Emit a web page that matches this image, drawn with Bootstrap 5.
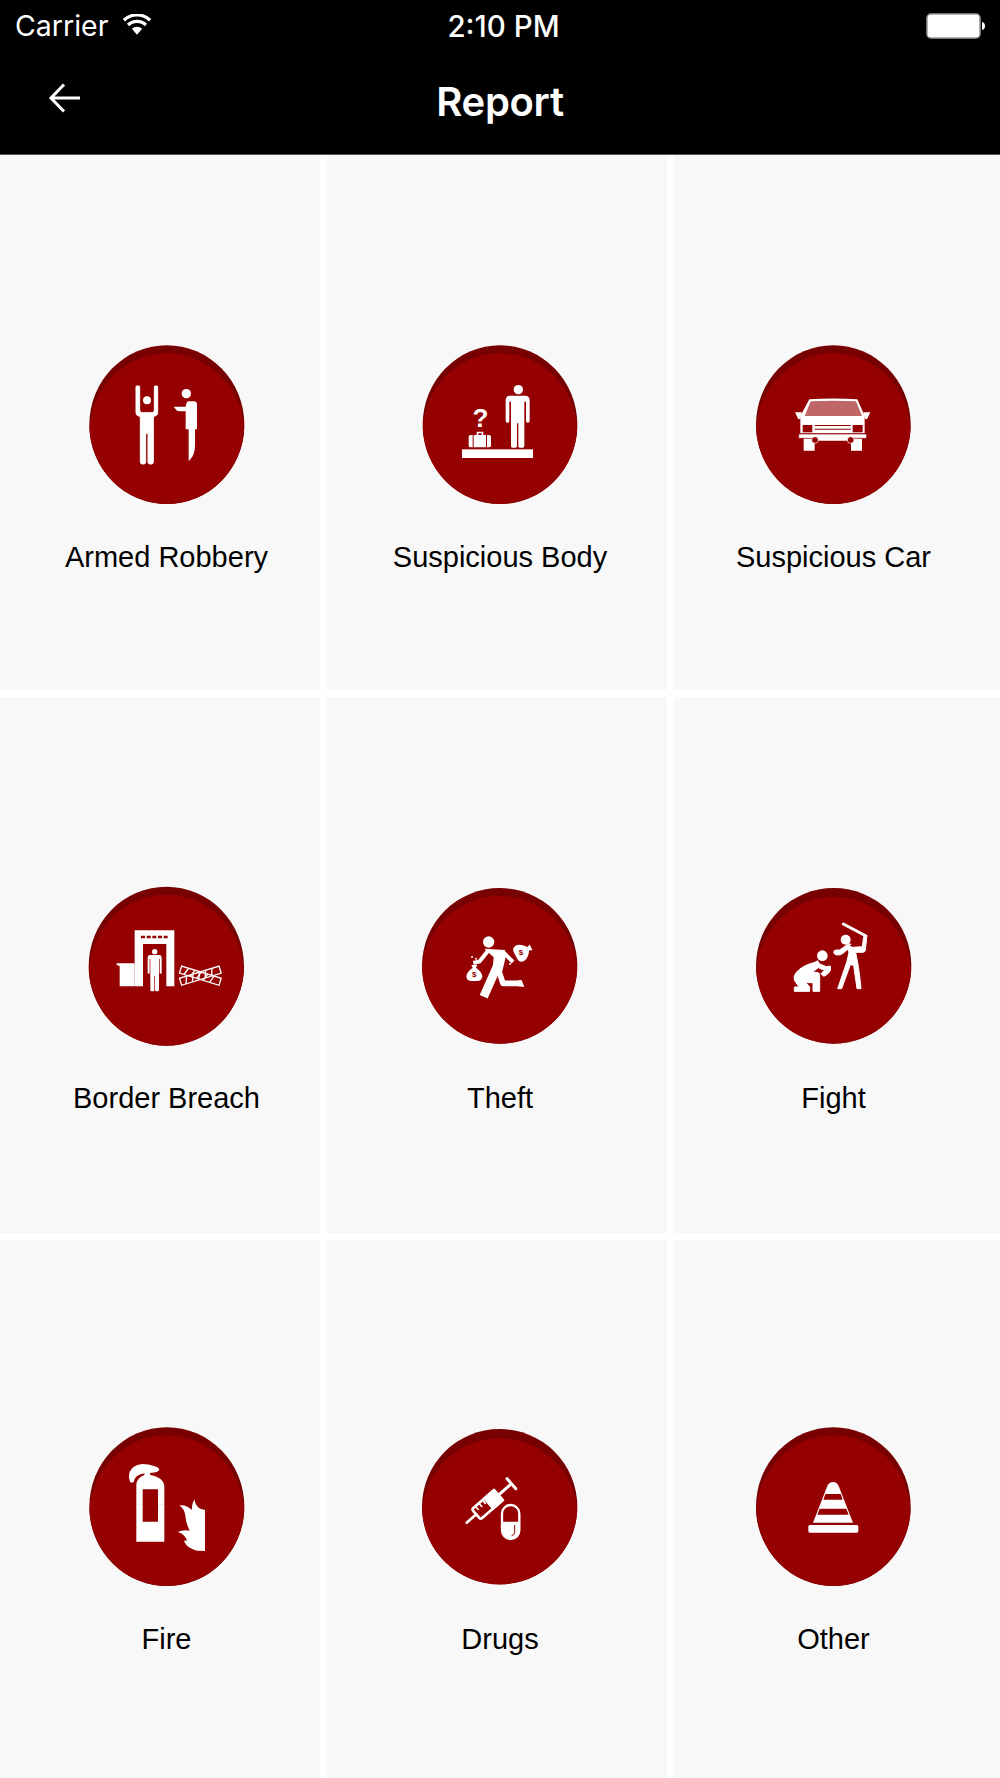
<!DOCTYPE html>
<html lang="en">
<head>
    <meta charset="UTF-8">
    <meta name="viewport" content="width=device-width, initial-scale=1.0">
    <title>Report</title>
    <link href="https://cdn.jsdelivr.net/npm/bootstrap@5.3.0/dist/css/bootstrap.min.css" rel="stylesheet">
    <style>
        body {
            background-color: #fff;
            font-family: "Liberation Sans", Arial, sans-serif;
        }

        .app-header {
            height: 155px;
            background-color: #000;
            border-bottom: 1px solid #555;
            font-family: Inter, "Liberation Sans", sans-serif;
        }

        .status-bar {
            height: 50px;
            padding: 2px 14px 0 15px;
            font-size: 28.5px;
        }

        .status-side {
            width: 300px;
            gap: 14px;
        }

        .status-time {
            font-size: 29.5px;
            font-weight: 500;
            margin-left: 6px;
        }

        .wifi-icon {
            margin-bottom: 4px;
        }

        .title-bar {
            height: 104px;
        }

        .title-side {
            width: 200px;
            padding-left: 48px;
            padding-bottom: 8px;
        }

        .page-title {
            font-size: 40px;
            font-weight: 600;
            letter-spacing: -0.3px;
        }

        .report-grid {
            display: grid;
            grid-template-columns: 320px 340px 326px;
            grid-template-rows: 535px 536px 538px;
            gap: 7px;
        }

        .report-cell {
            background-color: #f8f8f8;
            color: #000;
            text-align: center;
        }

        .report-cell svg {
            display: block;
            margin: 0 auto;
        }

        .col-one { padding-left: 13px; }
        .col-two { padding-left: 6px; }
        .col-three { padding-right: 7px; }

        .row-one { padding-top: 175px; }
        .row-two { padding-top: 173px; }
        .row-three { padding-top: 170px; }

        .report-label {
            margin-top: 20px;
            font-size: 29px;
            line-height: 35px;
        }

        .row-two .report-label { margin-top: 21px; }
        .row-three .report-label { margin-top: 22px; }

        .disc-dark { fill: #770000; }
        .disc-main { fill: #950000; }
        .ink { fill: #fff; }
        .ink-bold { fill: #fff; stroke: #fff; stroke-width: 3; stroke-linejoin: round; }
        .cut { fill: #950000; }
        .svg-note {
            font-family: "Liberation Sans", Arial, sans-serif;
            font-weight: 700;
        }
    </style>
</head>
<body>
    <!-- Status bar and title -->
    <header class="app-header text-white">
        <div class="status-bar d-flex align-items-center justify-content-between">
            <div class="status-side d-flex align-items-center">
                <span>Carrier</span>
                <svg class="wifi-icon" width="30" height="21" viewBox="0 0 32 22">
                    <path class="ink" d="M16 22 10.500 15.500A8 8 0 0 1 21.500 15.500Z"/>
                    <path d="M6.500 11.500A13.500 13.500 0 0 1 25.500 11.500M2 6.500A20 20 0 0 1 30 6.500" fill="none" stroke="#fff" stroke-width="3.500"/>
                </svg>
            </div>
            <span class="status-time">2:10 PM</span>
            <div class="status-side d-flex justify-content-end">
                <svg width="60" height="26" viewBox="0 0 60 26">
                    <rect x="1" y="1" width="53" height="24" rx="4" fill="#fff" stroke="#999" stroke-width="1.500"/>
                    <path d="M56 9q3 .5 3 4t-3 4z" fill="#fff"/>
                </svg>
            </div>
        </div>
        <div class="title-bar d-flex align-items-center justify-content-between">
            <div class="title-side">
                <svg class="d-block" width="34" height="30" viewBox="0 0 34 30">
                    <path d="M32 15H3M16 1.500 3 15 16 28.500" fill="none" stroke="#fff" stroke-width="3"/>
                </svg>
            </div>
            <div class="page-title">Report</div>
            <div class="title-side"></div>
        </div>
    </header>

    <!-- Report categories -->
    <main class="report-grid">
        <div class="report-cell col-one row-one">
            <svg width="190" height="190" viewBox="5 0 570 570">
                <ellipse class="disc-dark" cx="289.500" cy="284" rx="232.500" ry="238"/>
                <path class="disc-main" d="M57.300 296A232.500 238 0 0 0 521.700 296A232.500 238 0 0 0 57.300 296Z"/>
                <path class="ink-bold" d="M200 168h6a2 2 0 0 1 2 2V240q0 6 6 8h32q6-2 6-8V170a2 2 0 0 1 2-2h6a2 2 0 0 1 2 2V248q0 8-8 10l-5 2V396q0 6-6 6h-4q-6 0-6-6V310h-7V396q0 6-6 6h-4q-6 0-6-6V260l-5-2q-8-2-8-10V170a2 2 0 0 1 2-2z"/>
                <circle class="cut" cx="230" cy="211" r="16"/>
                <circle class="ink" cx="230" cy="211" r="12"/>
                <circle class="ink" cx="348" cy="191" r="14"/>
                <path class="ink" d="M356 214h14q10 0 10 10V298h-6V345q0 30-16 46l-3 2V298h-9V244q-20 0-26-2L310 230h36q2-16 10-16z"/>
            </svg>
            <div class="report-label">Armed Robbery</div>
        </div>
        <div class="report-cell col-two row-one">
            <svg width="190" height="190" viewBox="0 0 570 570">
                <ellipse class="disc-dark" cx="285" cy="284" rx="232" ry="238"/>
                <path class="disc-main" d="M53.300 296A232 238 0 0 0 516.700 296A232 238 0 0 0 53.300 296Z"/>
                <circle class="ink" cx="340" cy="179" r="14"/>
                <path class="ink" d="M318 197h42q14 0 14 14V272q0 6-5 6h-2q-4 0-4-6V215h-5V348q0 5-5 5h-9q-4 0-4-5V280h-4V348q0 5-5 5h-9q-4 0-4-5V215h-5V272q0 6-4 6h-2q-5 0-5-6V211q0-14 14-14z"/>
                <rect class="ink" x="171" y="358" width="213" height="26"/>
                <path class="ink" fill-rule="evenodd" d="M215 315v-10h20v10h17q6 0 6 6v26q0 5-6 5h-55q-6 0-6-5v-26q0-6 6-6zM220 315h10v-5h-10z"/>
                <path class="cut" d="M203 315h3v37h-3zM243 315h3v37h-3z"/>
                <text class="ink svg-note" x="226" y="292" font-size="78" text-anchor="middle">?</text>
            </svg>
            <div class="report-label">Suspicious Body</div>
        </div>
        <div class="report-cell col-three row-one">
            <svg width="190" height="190" viewBox="3 0 570 570">
                <ellipse class="disc-dark" cx="286" cy="284" rx="232" ry="238"/>
                <path class="disc-main" d="M54.300 296A232 238 0 0 0 517.700 296A232 238 0 0 0 54.300 296Z"/>
                <path class="ink" d="M214 208q72-5 144 0l22 50 v52H187v-52z"/>
                <path d="M218 214q68-4 136 0l18 44H200z" fill="#bf6666"/>
                <path class="ink" d="M171 247h21l-5 19-6 2zM397 247h-21l5 19 6 2z"/>
                <rect class="cut" x="194" y="285" width="29" height="22"/>
                <rect class="cut" x="344" y="285" width="30" height="22"/>
                <path class="cut" d="M230 285h108v3H230zM230 296h108v3H230z"/>
                <rect class="ink" x="182" y="312" width="204" height="13" rx="2" stroke="#950000" stroke-width="2"/>
                <path class="ink" d="M197 326h33v36H197zM339 326h33v36H339zM230 322h108v10H230z"/>
                <circle class="cut" cx="231" cy="330" r="10" stroke="#fff" stroke-width="2"/>
                <circle class="cut" cx="338" cy="330" r="10" stroke="#fff" stroke-width="2"/>
            </svg>
            <div class="report-label">Suspicious Car</div>
        </div>

        <div class="report-cell col-one row-two">
            <svg width="190" height="190" viewBox="5 0 570 570">
                <ellipse class="disc-dark" cx="288" cy="288.500" rx="233" ry="238.500"/>
                <path class="disc-main" d="M55.300 300.500A233 238.500 0 0 0 520.700 300.500A233 238.500 0 0 0 55.300 300.500Z"/>
                <path class="ink" d="M193 181H312V349H288V222H218V349H193z"/>
                <path class="ink" d="M139 280H193V349H148V288L139 285z"/>
                <path class="cut" d="M212 197h12v8h-12zM229 197h12v8h-12zM246 197h12v8h-12zM263 197h12v8h-12zM280 197h12v8h-12z"/>
                <circle class="ink" cx="253" cy="245" r="8"/>
                <path class="ink" d="M240 255h26q8 0 8 8V308q0 3-3 3t-3-3V266h-2V360q0 4-4 4h-5q-3 0-3-4V318h-2V360q0 4-3 4h-5q-4 0-4-4V266h-2V308q0 3-3 3t-3-3V263q0-8 8-8z"/>
                <g fill="none" stroke="#fff" stroke-width="4">
                    <g transform="rotate(17 390 317)">
                        <rect x="328" y="306" width="124" height="22"/>
                        <path d="M350 306l-8 22M370 306l-8 22M390 306l-8 22M410 306l-8 22M430 306l-8 22"/>
                    </g>
                    <g transform="rotate(-17 390 317)">
                        <rect x="328" y="306" width="124" height="22"/>
                        <path d="M350 306l-8 22M370 306l-8 22M390 306l-8 22M410 306l-8 22M430 306l-8 22"/>
                    </g>
                </g>
            </svg>
            <div class="report-label">Border Breach</div>
        </div>
        <div class="report-cell col-two row-two">
            <svg width="190" height="190" viewBox="0 0 570 570">
                <ellipse class="disc-dark" cx="284" cy="287.500" rx="233" ry="233.500"/>
                <path class="disc-main" d="M51.300 299.500A233 233.500 0 0 0 516.700 299.500A233 233.500 0 0 0 51.300 299.500Z"/>
                <circle class="ink" cx="251" cy="216" r="17"/>
                <path class="ink" d="M238 236 300 240 302 262 292 304H262L266 262z"/>
                <path d="M205 279 224 274 248 244M294 246 324 276" fill="none" stroke="#fff" stroke-width="12" stroke-linejoin="round"/>
                <path d="M276 290 236 380" fill="none" stroke="#fff" stroke-width="26"/>
                <path d="M280 298 294 340H350" fill="none" stroke="#fff" stroke-width="17" stroke-linejoin="round"/>
                <path class="ink" d="M340 331 350 331 358 351 340 349z"/>
                <path class="ink" d="M199 285h18l-4 8q19 14 19 26q0 14-16 14h-16q-16 0-16-14q0-12 19-26z"/>
                <text class="cut svg-note" x="208" y="320" font-size="24" text-anchor="middle">$</text>
                <g transform="translate(352 246) rotate(62) scale(1.100) translate(-208 -312)">
                    <path class="ink" d="M199 285h18l-4 8q19 14 19 26q0 14-16 14h-16q-16 0-16-14q0-12 19-26z"/>
                </g>
                <text class="cut svg-note" x="348" y="256" font-size="24" text-anchor="middle">$</text>
                <circle class="ink" cx="201" cy="261" r="3"/>
                <circle class="ink" cx="213" cy="266" r="3"/>
                <circle class="ink" cx="315" cy="282" r="3"/>
            </svg>
            <div class="report-label">Theft</div>
        </div>
        <div class="report-cell col-three row-two">
            <svg width="190" height="190" viewBox="0 0 570 570">
                <ellipse class="disc-dark" cx="284" cy="287.500" rx="233" ry="233.500"/>
                <path class="disc-main" d="M51.400 301A233 233.500 0 0 0 516.600 301A233 233.500 0 0 0 51.400 301Z"/>
                <path d="M313 162 381 198" stroke="#fff" stroke-width="9" stroke-linecap="round"/>
                <circle class="ink" cx="320" cy="209" r="15"/>
                <path class="ink-bold" d="M330 229l12 3 28-2 4-30 9 3-4 38q-1 6-8 6h-21l5 26q6 30 11 83h-12l-10-70-10-2-26 72h-12l28-82 6-28-4-8-14 12q-6 6-18 5q-8-1-10-7q0-8 8-8h10l20-14q6-5 14-4z"/>
                <circle class="ink" cx="250" cy="257" r="16"/>
                <path class="ink-bold" d="M236 272l6 10 20 8 12-2q4 14-6 22q-6 6-14 9l-8-8 10-10-18-8-18 14h12q8 0 10 6V364h-20V338h-22l12 12v14h-46v-13h14l-14-20q-4-12 6-24q20-22 56-30z"/>
            </svg>
            <div class="report-label">Fight</div>
        </div>

        <div class="report-cell col-one row-three">
            <svg width="190" height="190" viewBox="5 0 570 570">
                <ellipse class="disc-dark" cx="289.500" cy="290" rx="232.500" ry="238"/>
                <path class="disc-main" d="M57.300 302A232.500 238 0 0 0 521.700 302A232.500 238 0 0 0 57.300 302Z"/>
                <path class="ink" fill-rule="evenodd" d="M198 395V225q0-20 24-30l2-12h14l2 12q42 8 42 36V395zM217 238V335H263V238z"/>
                <path class="ink" d="M215 162q-30 4-38 26q-4 14 2 28q10 4 12-2q2-16 22-22q14-4 34-4q18 0 20-10q-4-8-16-10q-16-6-36-6z"/>
                <path d="M198 283h19M263 283h19" stroke="#e0b0b0" stroke-width="1"/>
                <path class="ink" d="M404 423V300L390 296Q376 290 372 268Q364 282 364 300Q350 284 327 286Q342 296 345 318Q347 340 358 362Q340 358 322 366Q344 372 350 392Q340 390 342 396Q352 416 380 422Z"/>
            </svg>
            <div class="report-label">Fire</div>
        </div>
        <div class="report-cell col-two row-three">
            <svg width="190" height="190" viewBox="0 0 570 570">
                <ellipse class="disc-dark" cx="284" cy="290" rx="233" ry="233"/>
                <path class="disc-main" d="M51.400 304A233 233 0 0 0 516.600 304A233 233 0 0 0 51.400 304Z"/>
                <g transform="translate(185 338) rotate(-41)" fill="none" stroke="#fff">
                    <path d="M0 0H38" stroke-width="8" stroke-linecap="round"/>
                    <rect x="38" y="-20" width="88" height="40" rx="6" stroke-width="8"/>
                    <rect x="88" y="-20" width="38" height="40" fill="#fff" stroke-width="8"/>
                    <path d="M126 0H178" stroke-width="9"/>
                    <path d="M178-20V20" stroke-width="9" stroke-linecap="round"/>
                    <path d="M52-20V-5M66-20V-5M80-20V-5" stroke-width="5"/>
                </g>
                <rect x="291" y="285" width="52" height="102" rx="26" fill="#950000" stroke="#fff" stroke-width="7"/>
                <path class="ink" d="M291 335H343V361a26 26 0 0 1-52 0z"/>
                <path d="M329 345v22q0 8-9 10" fill="none" stroke="#950000" stroke-width="3"/>
            </svg>
            <div class="report-label">Drugs</div>
        </div>
        <div class="report-cell col-three row-three">
            <svg width="190" height="190" viewBox="3 0 570 570">
                <ellipse class="disc-dark" cx="286" cy="290" rx="232" ry="238"/>
                <path class="disc-main" d="M54.300 302A232 238 0 0 0 517.700 302A232 238 0 0 0 54.300 302Z"/>
                <path class="ink" d="M225 338 268 228q6-12 17-12t17 12L345 338z"/>
                <path class="cut" d="M262 252H308L314 269H256zM245 296H325L332 314H238z"/>
                <rect class="ink" x="211" y="345" width="150" height="23" rx="5"/>
            </svg>
            <div class="report-label">Other</div>
        </div>
    </main>

    <script src="https://cdn.jsdelivr.net/npm/bootstrap@5.3.0/dist/js/bootstrap.bundle.min.js"></script>
</body>
</html>
